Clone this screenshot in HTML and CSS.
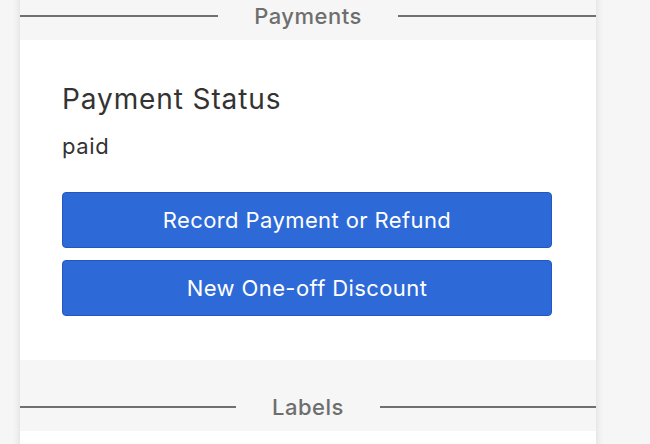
FILE: index.html
```html
<!DOCTYPE html>
<html lang="en">
<head>
<meta charset="utf-8">
<title>Payments</title>
<link rel="stylesheet" href="styles.css">
</head>
<body>
<div class="page">
  <div class="panel">
    <div class="divider first">
      <span class="rule"></span>
      <span class="divider-label">Payments</span>
      <span class="rule"></span>
    </div>
    <section class="card">
      <h2 class="card-title">Payment Status</h2>
      <p class="card-value">paid</p>
      <div class="actions">
        <button class="btn">Record Payment or Refund</button>
        <button class="btn">New One-off Discount</button>
      </div>
    </section>
    <div class="divider">
      <span class="rule"></span>
      <span class="divider-label">Labels</span>
      <span class="rule"></span>
    </div>
    <section class="card"></section>
  </div>
</div>
</body>
</html>
```

FILE: styles.css
```css
html, body {
  margin: 0;
  padding: 0;
  height: 100%;
  overflow: hidden;
}
body {
  background: #f6f6f6;
  font-family: Inter, "Noto Sans", sans-serif;
  color: #333333;
}
.page {
  padding-left: 20px;
}
.panel {
  width: 576px;
  background: #f6f6f6;
  box-shadow: 0 0 8px rgba(0, 0, 0, 0.12);
  min-height: 600px;
}
.divider {
  height: 71px;
  display: flex;
  align-items: center;
  padding-top: 23px;
  box-sizing: border-box;
}
.divider.first {
  margin-top: -31px;
}
.rule {
  flex: 1;
  height: 2px;
  background: #707070;
}
.divider-label {
  padding: 0 36px;
  font-size: 22px;
  font-weight: 500;
  letter-spacing: 0.5px;
  color: #6e6e6e;
  line-height: 24px;
}
.card {
  background: #ffffff;
  padding: 41px 44px 44px 42px;
}
.card-title {
  margin: 0;
  font-size: 28px;
  font-weight: 400;
  letter-spacing: 0.9px;
  line-height: 36px;
  color: #333333;
}
.card-value {
  margin: 15px 0 0;
  font-size: 22px;
  letter-spacing: 0.6px;
  line-height: 28px;
  color: #333333;
}
.actions {
  margin-top: 32px;
  display: flex;
  flex-direction: column;
  gap: 12px;
}
.btn {
  height: 56px;
  border: 1px solid #2457bd;
  border-radius: 4px;
  background: #2d6ad8;
  color: #ffffff;
  font-family: Inter, "Noto Sans", sans-serif;
  font-size: 22px;
  font-weight: 400;
  letter-spacing: 0.4px;
  cursor: pointer;
}
```
